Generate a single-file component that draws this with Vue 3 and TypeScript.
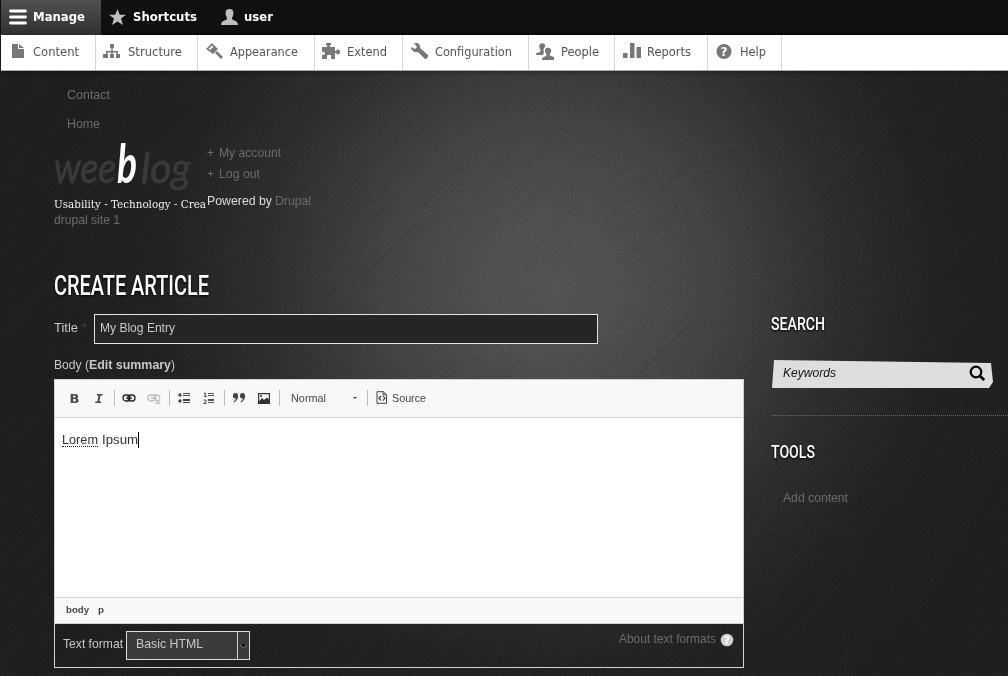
<script setup lang="ts">
import { h } from 'vue'

interface LabelProps {
  t: string
  w: number
  s?: number
  height?: number
  base?: number
}

// Single line of text set to a fixed measure
const Label = (p: LabelProps) =>
  h('svg', { class: 'label', width: p.w, height: p.height ?? 16 }, [
    h('text', { x: 0, y: p.base ?? 12, 'font-size': p.s ?? 13.6, textLength: p.w, lengthAdjust: 'spacingAndGlyphs' }, p.t),
  ])
Label.props = ['t', 'w', 's', 'height', 'base']

const tray = [
  { t: 'Content', w: 46, cell: 95, pad: 9, gap: 5, d: 'M2 1h6v5h6v9H2zM9 1l5 4H9z' },
  { t: 'Structure', w: 54, cell: 102, pad: 7, gap: 7, d: 'M7 1h4v4H9.7v3H15v3h2v4h-4v-4h.6V9.4H9.7V11H11v4H7v-4h1.3V9.4H4.4V11H5v4H0v-4h3V8h5.3V5H7z' },
  { t: 'Appearance', w: 68, cell: 117, pad: 8, gap: 6, d: 'M6 0l6 6-5 5-7-5zM6 2.500L2.500 6l1.500 1L7.500 3.700zM11 8l6 6-2 2-6-6z' },
  { t: 'Extend', w: 40, cell: 88, pad: 7, gap: 7, d: 'M0 4h5V2H4V0h5v2H8v2h5v4h1c1-2 4-2 4 1s-3 3-4 1h-1v6H9v-2c2-3-5-3-4 0v2H0v-4c4 1 4-4 0-3z' },
  { t: 'Configuration', w: 77, cell: 126, pad: 8, gap: 6, d: 'M3 0c4-1 7 2 6 5l8 7v2l-2 2h-1L7 9C3 10 0 7 0 4l4 2 2-2z' },
  { t: 'People', w: 38, cell: 86, pad: 7, gap: 7, d: 'M4 1c3-2 6 0 5 3-1 1-2 3-1 5L7 12H0c0-3 2-2 4-3 1-1 0-2 0-3-1-2-1-3 0-5zM10 5c3-1 6 0 5 4-1 2-2 3 0 4l3 1v3H6c0-3 2-3 4-4 1-1 0-3-1-4 0-2 0-3 1-4z' },
  { t: 'Reports', w: 44, cell: 93, pad: 8, gap: 6, d: 'M0 10h4.500v5H0zM7 0h4.500v15H7zM13.500 4h4.500v11h-4.500z' },
  { t: 'Help', w: 26, cell: 74, pad: 8, gap: 6, d: 'M8 1a7.5 7.5 0 1 0 .01 0z' },
]

const streaks = (() => {
  let seed = 41
  const rnd = () => (seed = (seed * 16807) % 2147483647) / 2147483647
  return Array.from({ length: 420 }, () => {
    const x = rnd() * 1050 - 30
    const y = 80 + rnd() * 620
    const l = 20 + rnd() * 45
    return { x, y, l, dark: rnd() > 0.5, o: 0.015 + rnd() * 0.03 }
  })
})()
</script>

<template>
  <div class="page">
    <svg class="texture" width="1008" height="676">
      <filter id="grain" x="0" y="0" width="100%" height="100%">
        <feTurbulence type="fractalNoise" baseFrequency="0.6" numOctaves="2" seed="4" />
        <feColorMatrix values="1 0 0 0 0 1 0 0 0 0 1 0 0 0 0 0 0 0 0 1" />
      </filter>
      <rect class="grain" width="1008" height="676" filter="url(#grain)" />
      <line v-for="(s, i) in streaks" :key="i" :x1="s.x" :y1="s.y" :x2="s.x + s.l" :y2="s.y - s.l" :stroke="s.dark ? '#000' : '#fff'" :stroke-opacity="s.dark ? s.o * 3 : s.o" />
    </svg>

    <header class="bar">
      <div class="tab active">
        <svg width="18" height="16"><path d="M1.500 2h15M1.500 8h15M1.500 14h15" stroke="#fff" stroke-width="2.800" stroke-linecap="round" /></svg>
        <Label t="Manage" :w="52" :s="13" />
      </div>
      <div class="tab shortcuts">
        <svg width="17" height="16" viewBox="0 0 17 16"><path fill="#bebebe" d="M8.5 0l2.2 5.8H17l-5 3.8 2 6.4-5.500-3.600L3 16l2-6.400-5-3.800h6.300z" /></svg>
        <Label t="Shortcuts" :w="64" :s="13" />
      </div>
      <div class="tab user">
        <svg width="17" height="16" viewBox="0 0 17 16"><path fill="#bebebe" d="M8.500 0C11 0 12.500 1.500 12.500 4S11 8 11 10c0 1.500 6 1 6 6H0c0-5 6-4.500 6-6 0-2-1.500-3.500-1.500-6S6 0 8.500 0z" /></svg>
        <Label t="user" :w="29" :s="13" />
      </div>
    </header>
    <nav class="tray">
      <div v-for="m in tray" :key="m.t" class="cell" :style="{ width: m.cell + 'px', paddingLeft: m.pad + 'px', gap: m.gap + 'px' }">
        <svg width="18" height="17"><path :d="m.d" fill="#787878" fill-rule="evenodd" /><text v-if="m.t === 'Help'" class="q" x="8" y="13" text-anchor="middle">?</text></svg>
        <Label :t="m.t" :w="m.w" :s="13" />
      </div>
    </nav>

    <div class="columns">
      <main>
        <div class="links">
          <Label t="Contact" :w="43" />
          <Label t="Home" :w="33" />
        </div>
        <div class="head">
          <div class="brand">
            <svg class="logo" width="150" height="64">
              <text class="dim" x="0" y="51" font-size="43" textLength="62" lengthAdjust="spacingAndGlyphs">wee</text>
              <text class="lit" x="63" y="51" font-size="53" textLength="20" lengthAdjust="spacingAndGlyphs">b</text>
              <text class="dim" x="87" y="51" font-size="43" textLength="50" lengthAdjust="spacingAndGlyphs">log</text>
            </svg>
            <Label class="tagline" t="Usability - Technology - Crea" :w="152" :s="11.5" />
            <Label t="drupal site 1" :w="66" />
          </div>
          <div class="account">
            <div class="item"><Label t="+" :w="7" /><Label t="My account" :w="62" /></div>
            <div class="item"><Label t="+" :w="7" /><Label t="Log out" :w="41" /></div>
            <div class="powered"><Label class="light" t="Powered by" :w="65" /><Label t="Drupal" :w="36" /></div>
          </div>
        </div>

        <h1><Label class="display" t="CREATE ARTICLE" :w="155" :s="28.5" :height="40" :base="29" /></h1>

        <div class="title-row">
          <Label class="soft" t="Title" :w="24" />
          <Label class="star" t="*" :w="5" />
          <div class="field"><Label class="soft" t="My Blog Entry" :w="75" /></div>
        </div>
        <div class="body-label">
          <Label class="soft" t="Body (" :w="35" /><Label class="soft strong" t="Edit summary" :w="82" /><Label class="soft" t=")" :w="4" />
        </div>

        <section class="editor">
          <div class="tools">
            <div class="group">
              <svg class="ico" viewBox="0 0 16 16"><text x="8.500" y="12.500" text-anchor="middle" class="bold">B</text></svg>
              <svg class="ico" viewBox="0 0 16 16"><text x="8" y="12.500" text-anchor="middle" class="ital">I</text></svg>
            </div>
            <div class="group">
              <svg class="ico" viewBox="0 0 16 16"><g fill="none" stroke="#222" stroke-width="1.300"><rect x="2" y="5" width="7" height="6" rx="3" /><rect x="7" y="5" width="7" height="6" rx="3" /><path d="M5 8h6" /></g></svg>
              <svg class="ico" viewBox="0 0 16 16"><g fill="none" stroke="#bbb" stroke-width="1.300"><rect x="2" y="5" width="7" height="6" rx="3" /><path d="M8 5h3.500c2 0 3 2 2 3.500M5 8h6M9.500 9.500l4.500 4.500M14 9.500L9.500 14" /></g></svg>
            </div>
            <div class="group">
              <svg class="ico" viewBox="0 0 16 16"><g fill="#444"><circle cx="4" cy="5" r="1.700" /><circle cx="4" cy="11" r="1.700" /><path d="M7 3h7v1H7zM7 5h7v1H7zM7 9h7v2H7zM7 12h7v1H7z" /></g></svg>
              <svg class="ico" viewBox="0 0 16 16"><path fill="#555" d="M7 3h6v1H7zM7 5h6v1H7zM7 9h6v2H7zM7 12h6v1H7z" /><text class="digit" x="2" y="7">1</text><text class="digit" x="2" y="14">2</text></svg>
            </div>
            <div class="group">
              <svg class="ico" viewBox="0 0 16 16"><path fill="#444" d="M4.500 3C8.500 3 8 10 3 12.500l-.5-1C4 10.500 5 9.500 4.800 8.500 1 9 1 3 4.500 3zM11.500 3c4 0 3.500 7-1.500 9.500l-.5-1c1.500-1 2.500-2 2.300-3C8 9 8 3 11.500 3z" /></svg>
              <svg class="ico" viewBox="0 0 16 16"><path fill="#333" fill-rule="evenodd" d="M2 3h12v11H2zM3.200 4.200v7L6 8l2 2 3-2.500 1.800 2V4.200z" /><circle cx="5" cy="6" r="1.100" fill="#333" /></svg>
            </div>
            <div class="format"><Label t="Normal" :w="35" :s="11.5" /><i class="caret"></i></div>
            <div class="source">
              <svg width="12" height="13"><path d="M1 .7h6.500L10.500 3.500v8.800H1zM7 .7v3h3" fill="none" stroke="#444" /><path d="M5 5L3 7.200 5 9.500M7 5l2 2.200L7 9.500" fill="none" stroke="#444" stroke-width="1.200" /></svg>
              <Label t="Source" :w="34" :s="11.5" />
            </div>
          </div>
          <div class="content">
            <Label class="lorem" t="Lorem" :w="36" :s="13" /><Label t="Ipsum" :w="36" :s="13" /><i class="cursor"></i>
          </div>
          <div class="path"><Label t="body" :w="23" :s="9.500" /><Label t="p" :w="6" :s="9.500" /></div>
          <div class="bottom">
            <Label class="soft" t="Text format" :w="60" />
            <div class="select"><Label class="soft" t="Basic HTML" :w="67" /><span class="drop"><svg width="10" height="6"><path d="M2.500 1.500h4L4.500 4z" fill="#000" /><path d="M1 2l3.500 3L8 2" stroke="#888" fill="none" stroke-width=".7" /></svg></span></div>
            <div class="about">
              <Label t="About text formats" :w="97" />
              <svg width="14" height="14"><circle cx="7" cy="7" r="6.300" fill="#d0d0d0" /><text class="q light-q" x="7" y="11" text-anchor="middle">?</text></svg>
            </div>
          </div>
        </section>
      </main>

      <aside>
        <Label class="display" t="SEARCH" :w="54" :s="19" :height="24" :base="17" />
        <div class="search">
          <Label t="Keywords" :w="53" />
          <svg width="17" height="17"><circle cx="7" cy="7" r="5.300" fill="none" stroke="#000" stroke-width="2.200" /><path d="M11 11l4.200 4" stroke="#000" stroke-width="2.800" /></svg>
        </div>
        <div class="rule"></div>
        <Label class="display" t="TOOLS" :w="44" :s="19" :height="24" :base="17" />
        <Label class="add" t="Add content" :w="65" />
      </aside>
    </div>
  </div>
</template>

<style>
body { background: #1e1e1e; overflow: hidden; }
</style>

<style scoped>
.page { position: relative; width: 1008px; height: 676px; overflow: hidden; background: radial-gradient(circle at 550px 285px, #4a4a4a 0, #464646 70px, #3c3c3c 165px, #292929 285px, #1e1e1e 390px, #1b1b1b 520px); font-family: "Liberation Sans", Arial, sans-serif; }
.page * { box-sizing: border-box; }
.texture { position: absolute; inset: 0; }
.grain { opacity: .26; mix-blend-mode: overlay; }
svg { display: block; flex: none; }
.label { overflow: visible; fill: #6c6c6c; }
.bar { position: relative; display: flex; height: 35px; background: linear-gradient(#101010 92%, #080808); padding-left: 1px; font-family: "DejaVu Sans", sans-serif; font-weight: bold; }
.tab { display: flex; align-items: center; padding-bottom: 1px; }
.tab .label { fill: #fff; }
.active { width: 100px; padding-left: 8px; gap: 6px; background: linear-gradient(#505050, #303030); }
.shortcuts { padding-left: 8px; gap: 7px; }
.user { padding-left: 24px; gap: 6px; }
.tray { position: relative; display: flex; height: 36px; margin-left: 1px; background: #fff; border-bottom: 1px solid #a8acaa; font-family: "DejaVu Sans", sans-serif; box-shadow: 0 1px 4px rgba(0,0,0,.4); }
.tray .cell { display: flex; align-items: center; padding-bottom: 2px; border-right: 1px solid #d6d6d6; }
.tray .label { fill: #555; }
.q { font: bold 12px "DejaVu Sans", sans-serif; fill: #fff; }
.light-q { font-size: 11px; }
.columns { position: relative; display: grid; grid-template-columns: 690px 1fr; column-gap: 27px; padding-left: 54px; }
.links { display: flex; flex-direction: column; gap: 13px; padding: 16px 0 0 13px; }
.head { display: flex; }
.brand { width: 153px; }
.logo { overflow: visible; font-family: Lato, sans-serif; font-style: italic; }
.logo .dim { fill: #3a3a3a; stroke: #3a3a3a; stroke-width: .8; }
.logo .lit { fill: #fff; font-weight: 700; }
.label.tagline { font-family: "DejaVu Serif", serif; fill: #f2f2f2; }
.account { padding-top: 13px; }
.item { display: flex; gap: 5px; margin-bottom: 5px; }
.powered { display: flex; gap: 3px; margin-top: 11px; }
.label.light { fill: #ddd; }
.label.soft { fill: #c8c8c8; }
.label.strong { font-weight: bold; }
.label.star { fill: #444; }
h1 { margin: 38px 0 0; font-weight: 400; }
.label.display { fill: #fff; font-family: Roboto, sans-serif; font-weight: 500; filter: drop-shadow(0 1px 1px #000); }
h1 .label.display { position: relative; }
.title-row { display: flex; align-items: center; gap: 4px; height: 30px; margin-top: 8px; }
.title-row > .label { margin-bottom: 2px; }
.field { width: 504px; height: 30px; margin-left: 3px; padding: 5px; border: 1px solid #e4e4e4; background: #252525; }
.body-label { display: flex; margin-top: 13px; }
.editor { height: 289px; margin-top: 6px; border: 1px solid #d3d3d3; }
.tools { display: flex; align-items: center; height: 38px; padding: 0 0 2px 7px; background: #f8f8f8; border-bottom: 1px solid #d1d1d1; }
.tools .label { fill: #484848; }
.group { display: flex; align-items: center; width: 53px; height: 16px; margin-right: 2px; border-right: 1px solid #bcbcbc; }
.ico { width: 16px; height: 16px; margin: 0 5px 0 4px; }
.bold { font: bold 13px "DejaVu Sans", sans-serif; fill: #484848; }
.ital { font: italic bold 13px "DejaVu Sans Mono", monospace; fill: #484848; }
.digit { font: bold 6px "DejaVu Sans", sans-serif; fill: #444; }
.format { display: flex; align-items: center; width: 86px; height: 16px; padding-left: 9px; border-right: 1px solid #bcbcbc; }
.caret { margin-left: 27px; border: 2.500px solid transparent; border-top-color: #444; border-bottom: 0; }
.source { display: flex; align-items: center; gap: 4px; padding-left: 8px; }
.content { display: flex; height: 179px; padding: 14px 0 0 7px; background: #fff; gap: 4px; }
.content .label { fill: #333; }
.content .lorem { border-bottom: 1px dotted #222; height: 15px; }
.cursor { width: 1px; height: 16px; margin-left: -4px; background: #000; }
.path { display: flex; gap: 9px; height: 27px; padding: 3px 0 0 11px; background: #f8f8f8; border-top: 1px solid #d1d1d1; border-bottom: 1px solid #d1d1d1; font-weight: bold; }
.path .label { fill: #484848; }
.bottom { display: flex; padding: 7px 9px 0 8px; }
.bottom > .label { margin-top: 5px; }
.select { display: flex; justify-content: space-between; width: 124px; height: 29px; margin-left: 3px; padding: 4px 0 0 9px; border: 1px solid #ddd; background: #3b3b3b; }
.drop { display: flex; align-items: center; justify-content: center; width: 12px; margin-top: -4px; border-left: 1px solid #ccc; }
.about { display: flex; gap: 4px; margin-left: auto; }
.about svg:last-child { margin-top: 2px; }
aside { padding-top: 242px; }
.search { display: flex; justify-content: space-between; width: 222px; height: 28px; margin: 23px 0 27px 1px; padding: 5px 8px 0 11px; background: #dedede; clip-path: polygon(2px 0, 219px 3px, 221px 22px, 217px 28px, 0 28px); }
.search .label { fill: #111; font-style: italic; }
.rule { height: 1px; border-top: 1px dotted #686868; margin-bottom: 25px; }
.add { margin: 25px 0 0 12px; }
</style>
